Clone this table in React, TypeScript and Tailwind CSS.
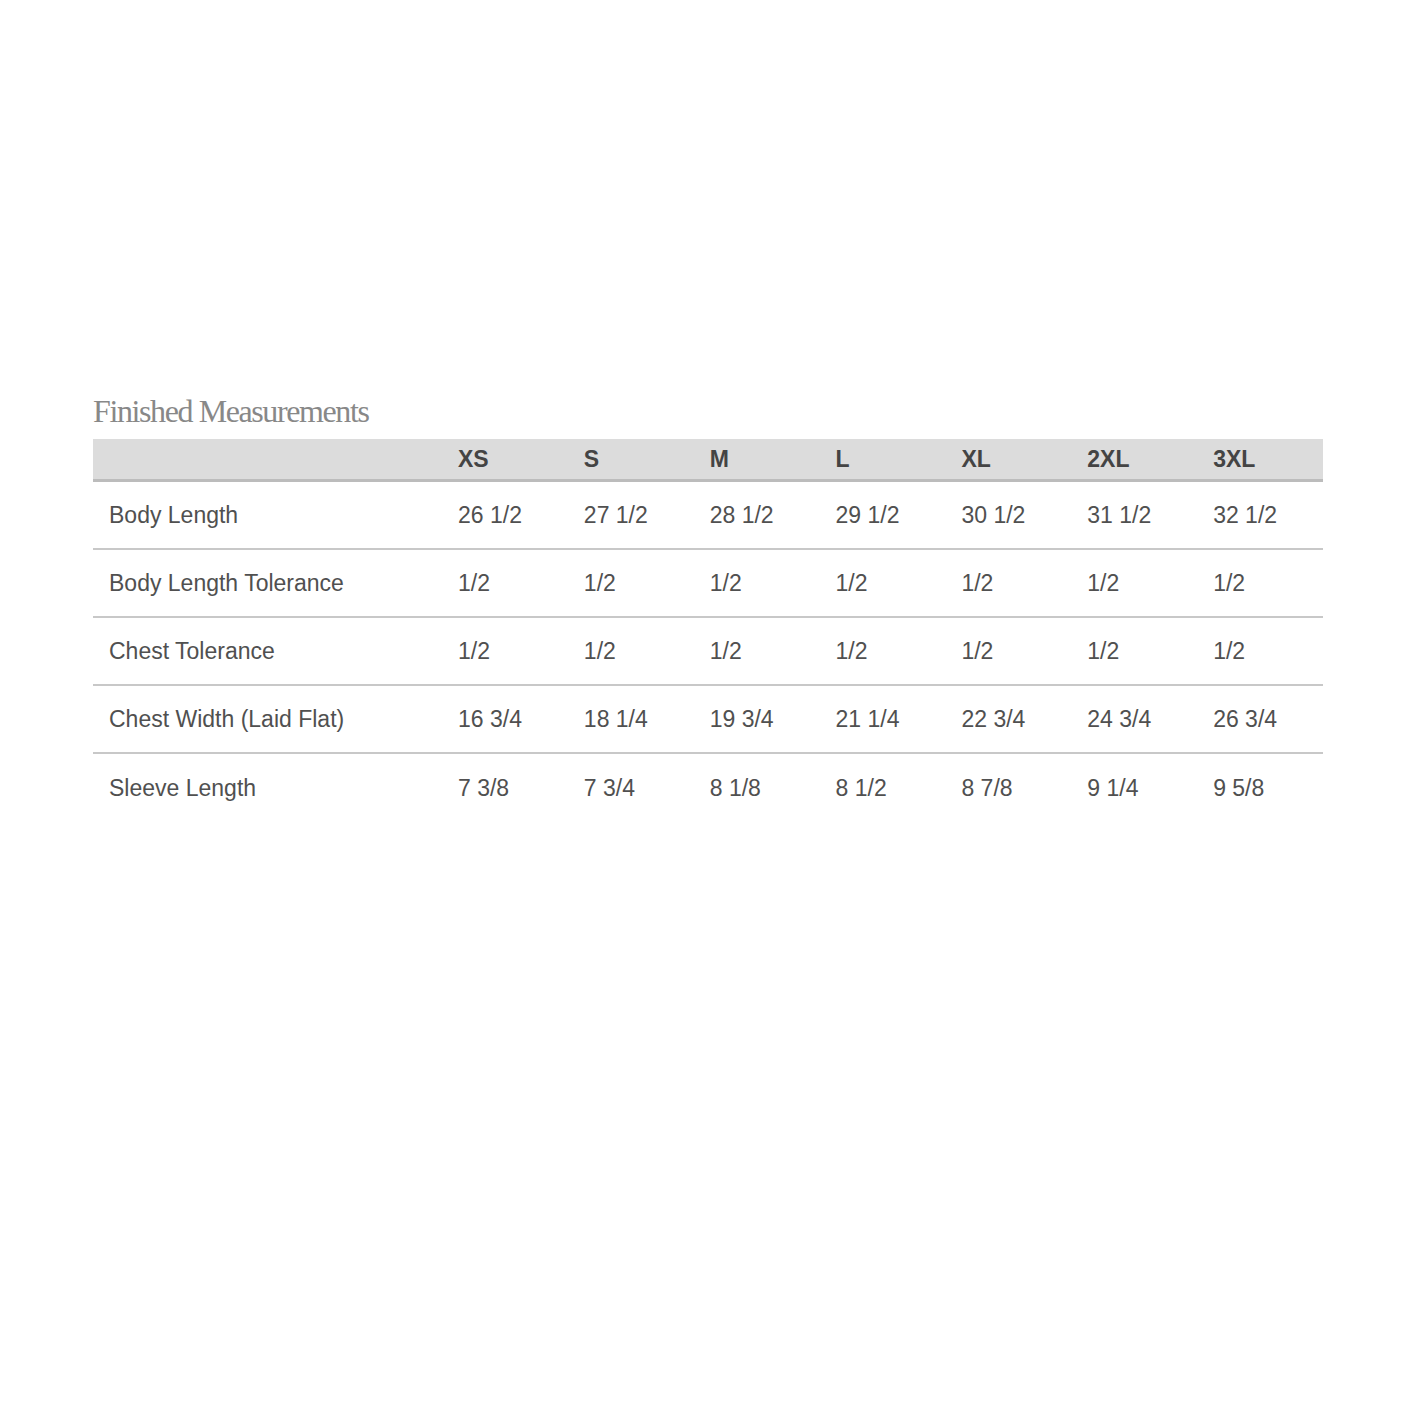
const SIZES = ["XS", "S", "M", "L", "XL", "2XL", "3XL"];

const ROWS: { label: string; values: string[] }[] = [
	{
		label: "Body Length",
		values: ["26 1/2", "27 1/2", "28 1/2", "29 1/2", "30 1/2", "31 1/2", "32 1/2"],
	},
	{
		label: "Body Length Tolerance",
		values: ["1/2", "1/2", "1/2", "1/2", "1/2", "1/2", "1/2"],
	},
	{
		label: "Chest Tolerance",
		values: ["1/2", "1/2", "1/2", "1/2", "1/2", "1/2", "1/2"],
	},
	{
		label: "Chest Width (Laid Flat)",
		values: ["16 3/4", "18 1/4", "19 3/4", "21 1/4", "22 3/4", "24 3/4", "26 3/4"],
	},
	{
		label: "Sleeve Length",
		values: ["7 3/8", "7 3/4", "8 1/8", "8 1/2", "8 7/8", "9 1/4", "9 5/8"],
	},
];

export default function App() {
	return (
		<div className="w-[1423px] h-[1423px] bg-white pt-[389px] pl-[93px]">
			<div className="w-[1230px]">
				{/* Title */}
				<h2 className="font-['Liberation_Serif',serif] text-[32px] leading-[44px] tracking-[-1.4px] text-[#888888] mb-[6px]">
					Finished Measurements
				</h2>

				{/* Table */}
				<div className="font-['Liberation_Sans',Arial,sans-serif] text-[23px]">
					<div className="grid grid-cols-[349px_repeat(7,1fr)] h-[43px] items-center bg-[#dcdcdc] border-b-[3px] border-[#bcbcbc] font-bold text-[#444444]">
						<div />
						{SIZES.map((s) => (
							<div key={s} className="pl-[16px]">
								{s}
							</div>
						))}
					</div>

					{ROWS.map((row, i) => (
						<div
							key={row.label}
							className={
								i < ROWS.length - 1
									? "grid grid-cols-[349px_repeat(7,1fr)] h-[68px] items-center border-b-2 border-[#c8c8c8] text-[#505050]"
									: "grid grid-cols-[349px_repeat(7,1fr)] h-[68px] items-center text-[#505050]"
							}
						>
							<div className="pl-[16px]">{row.label}</div>
							{row.values.map((v, j) => (
								<div key={`${row.label}-${j}`} className="pl-[16px]">
									{v}
								</div>
							))}
						</div>
					))}
				</div>
			</div>
		</div>
	);
}
